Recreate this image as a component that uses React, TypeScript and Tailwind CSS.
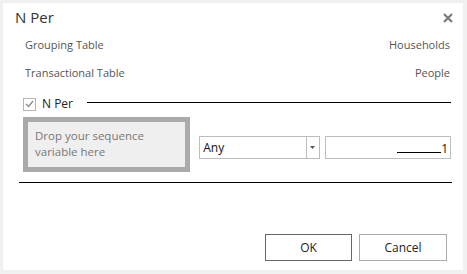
const font = { fontFamily: '"Open Sans", "Noto Sans", sans-serif' };

const App = () => {
  return (
    <div className="h-[274px] w-[467px] bg-[#f0f0f0] pl-[3px] pt-[3px]" style={font}>
      <div className="flex h-[267px] w-[460px] flex-col bg-white">
        {/* Title bar */}
        <div className="flex h-[28px] items-center justify-between pl-[12px] pr-[10px]">
          <span className="text-[15px] leading-none text-[#333]">N Per</span>
          <svg width="10" height="10" viewBox="0 0 10 10" className="mt-[2px]">
            <path d="M1 1 L9 9 M9 1 L1 9" stroke="#7a7a7a" strokeWidth="2.2" />
          </svg>
        </div>

        {/* Table info */}
        <div className="mt-[6px] flex flex-col gap-[12px] pl-[22px] pr-[13px] text-[11px] text-[#555]">
          <div className="flex h-[16px] items-center justify-between">
            <span>Grouping Table</span>
            <span>Households</span>
          </div>
          <div className="flex h-[16px] items-center justify-between">
            <span>Transactional Table</span>
            <span>People</span>
          </div>
        </div>

        {/* N Per section */}
        <div className="mt-[16px] pl-[20px] pr-[12px]">
          <div className="flex h-[14px] items-center">
            <span className="flex h-[13px] w-[13px] items-center justify-center border border-[#b5b5b5] bg-white">
              <svg width="9" height="8" viewBox="0 0 9 8">
                <path d="M1 4 L3.5 6.5 L8 1" fill="none" stroke="#8a8a8a" strokeWidth="1.3" />
              </svg>
            </span>
            <span className="ml-[6px] text-[12px] text-[#222]">N Per</span>
            <div className="ml-[14px] mb-[4px] h-px flex-1 bg-black" />
          </div>

          <div className="mt-[6px] flex items-start">
            <div className="h-[55px] w-[168px] border-[5px] border-[#aaaaaa] bg-[#efefef] px-[7px] pt-[6px] text-[11.5px] leading-[16px] text-[#777]">
              Drop your sequence
              <br />
              variable here
            </div>
            <div className="ml-[9px] mt-[19px] flex h-[23px] w-[121px] items-center border border-[#bdbdbd]">
              <span className="flex-1 pl-[3px] text-[12px] text-[#111]">Any</span>
              <span className="flex h-full w-[13px] items-center justify-center border-l border-[#bdbdbd]">
                <svg width="5" height="3" viewBox="0 0 5 3">
                  <path d="M0 0 H5 L2.5 3 Z" fill="#555" />
                </svg>
              </span>
            </div>
            <div className="ml-[5px] mt-[19px] flex h-[23px] w-[127px] items-end justify-end border border-[#bdbdbd] pb-[3px] pr-[2px]">
              <div className="mb-[2px] h-px w-[44px] bg-black" />
              <span className="text-[12px] leading-none text-[#111]">1</span>
            </div>
          </div>

          <div className="mt-[10px] ml-[-4px] mr-[-1px] h-px bg-black" />
        </div>

        {/* Buttons */}
        <div className="mt-auto mb-[9px] flex justify-end gap-[7px] pr-[16px]">
          <button className="h-[27px] w-[87px] border border-[#666] bg-white text-[12px] text-[#222]">OK</button>
          <button className="h-[27px] w-[88px] border border-[#ababab] bg-white text-[12px] text-[#222]">Cancel</button>
        </div>
      </div>
    </div>
  );
};

export default App;
